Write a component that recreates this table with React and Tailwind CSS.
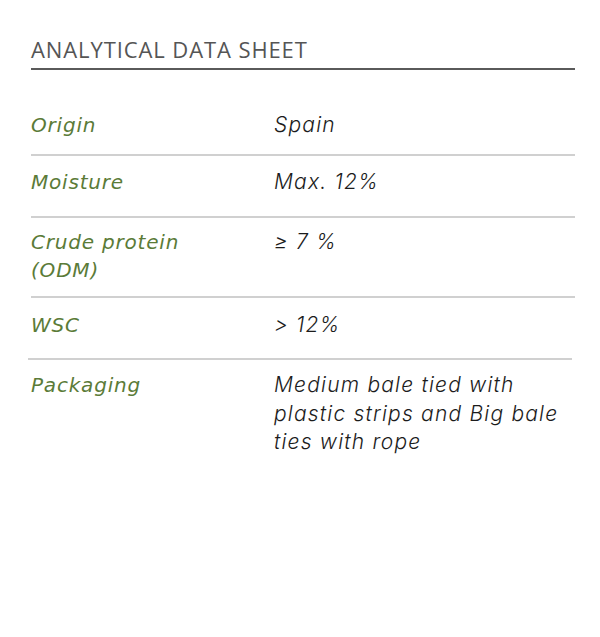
import React from 'react'

const rows = [
  { label: 'Origin', value: 'Spain', pad: 'pt-[17px] min-h-[60px]' },
  { label: 'Moisture', value: 'Max. 12%', pad: 'pt-[12px] min-h-[60px]' },
  { label: 'Crude protein (ODM)', value: '≥ 7 %', pad: 'pt-[10px] pb-[12px] min-h-[60px]' },
  { label: 'WSC', value: '> 12%', pad: 'pt-[13px] min-h-[60px]' },
  { label: 'Packaging', value: 'Medium bale tied with plastic strips and Big bale ties with rope', pad: 'pt-[11px] min-h-[60px]' },
]

export default function App() {
  return (
    <div className="min-h-[637px] w-[600px] bg-white pl-[31px] pr-[25px] pt-[36px]">
      <h2
        className="text-[22px] leading-[26px] text-[#555] uppercase tracking-[0.9px]"
        style={{ fontFamily: '"Open Sans", sans-serif' }}
      >
        Analytical data sheet
      </h2>
      <div className="mt-[6px] h-[2px] bg-[#5a5a5a]" />

      <div className="mt-[24px]">
        {rows.map((r, i) => (
          <div key={r.label}>
            <div className={`flex ${r.pad}`}>
              <div
                className="w-[243px] shrink-0 pr-[60px] text-[20px] leading-[28px] italic font-light tracking-[0.8px] text-[#5b7b38]"
                style={{ fontFamily: '"DejaVu Sans", sans-serif' }}
              >
                {r.label}
              </div>
              <div
                className="flex-1 pr-[8px] text-[21px] leading-[28.5px] italic font-light tracking-[1.2px] text-[#1c1c1c]"
                style={{ fontFamily: 'Inter, sans-serif' }}
              >
                {r.value}
              </div>
            </div>
            {i < rows.length - 1 && (
              <div className={`h-[2px] bg-[#d0d0d0] ${i === 3 ? '-ml-[3px] mr-[3px]' : ''}`} />
            )}
          </div>
        ))}
      </div>
    </div>
  )
}
